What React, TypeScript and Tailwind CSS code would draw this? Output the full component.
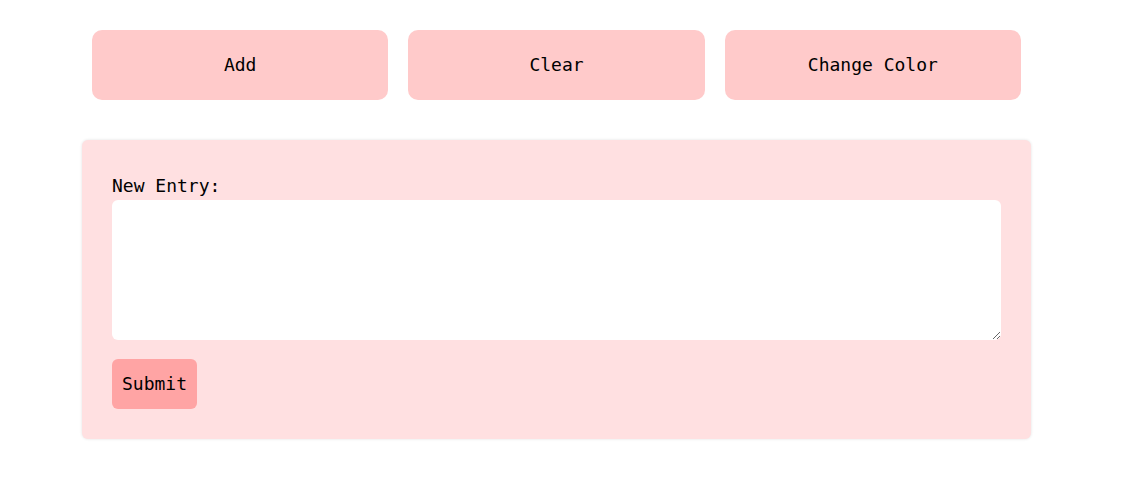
import { useState } from 'react';

const mono = "font-['DejaVu_Sans_Mono',monospace]";

export default function App() {
  const [entry, setEntry] = useState('');

  return (
    <div className={`min-h-screen bg-white text-black ${mono}`}>
      <div className="ml-[82px] w-[949px] pt-[30px]">
        {/* Top action buttons */}
        <div className="flex gap-5 px-[10px]">
          {['Add', 'Clear', 'Change Color'].map((label) => (
            <button
              key={label}
              className="h-[70px] flex-1 rounded-[10px] bg-[#ffcaca] text-[18px] leading-none text-black"
            >
              {label}
            </button>
          ))}
        </div>

        {/* Entry form */}
        <div className="mt-[40px] rounded-[6px] bg-[#ffe0e1] px-[30px] pt-[35px] pb-[30px] shadow-[0_0_3px_rgba(0,0,0,0.12)]">
          <label htmlFor="entry" className="block h-[21px] text-[18px] leading-[21px]">
            New Entry:
          </label>
          <textarea
            id="entry"
            value={entry}
            onChange={(e) => setEntry(e.target.value)}
            className="mt-[4px] block h-[140px] w-full rounded-[6px] bg-white p-2 text-[16px] outline-none"
          />
          <button className="mt-[19px] block h-[50px] rounded-[6px] bg-[#ffa4a4] px-[10px] text-[18px] leading-none text-black">
            Submit
          </button>
        </div>
      </div>
    </div>
  );
}
